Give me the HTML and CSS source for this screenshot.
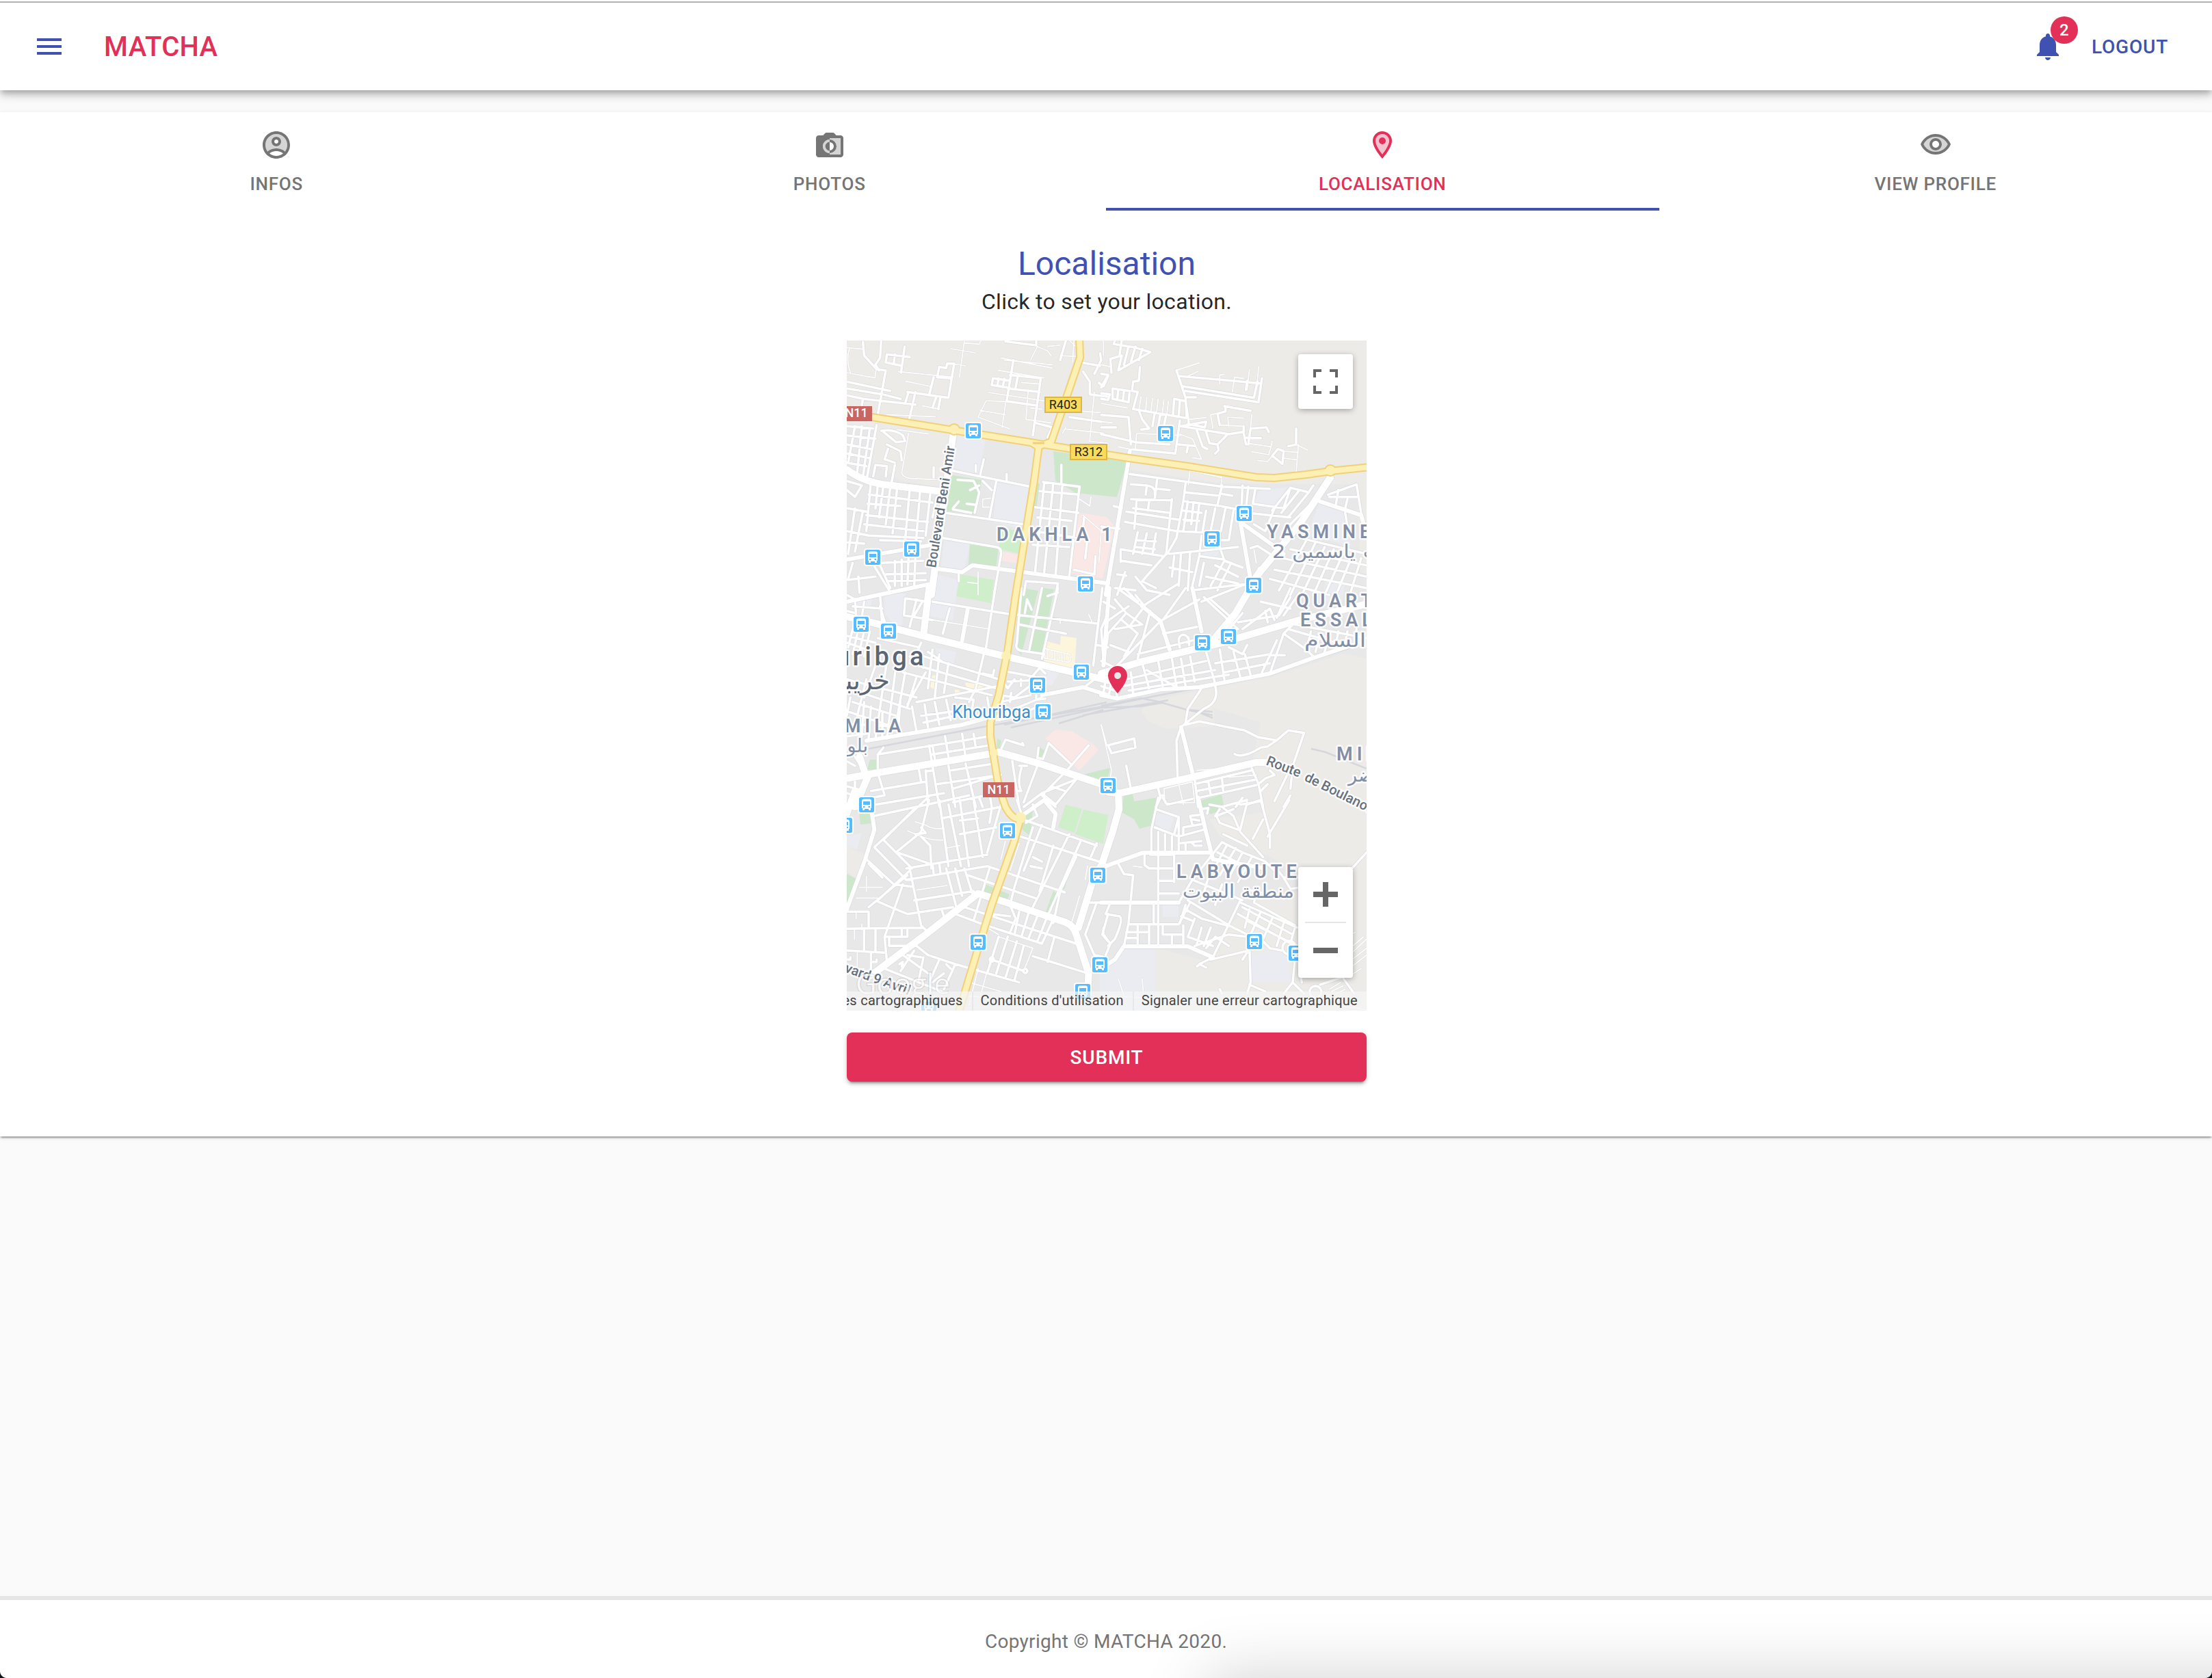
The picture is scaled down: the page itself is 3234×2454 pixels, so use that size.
FILE: index.html
```html
<!DOCTYPE html>
<html lang="fr">
<head>
<meta charset="utf-8">
<title>Matcha</title>
<link rel="stylesheet" href="styles.css">
</head>
<body>
<header class="appbar">
  <svg class="icon menu" viewBox="0 0 24 24"><path d="M3 18h18v-2H3v2zm0-5h18v-2H3v2zm0-7v2h18V6H3z"/></svg>
  <span class="brand">MATCHA</span>
  <div class="bell">
    <svg class="icon" viewBox="0 0 24 24"><path d="M12 22c1.1 0 2-.9 2-2h-4c0 1.1.89 2 2 2zm6-6v-5c0-3.07-1.64-5.64-4.5-6.32V4c0-.83-.67-1.5-1.5-1.5s-1.5.67-1.5 1.5v.68C7.63 5.36 6 7.92 6 11v5l-2 2v1h16v-1l-2-2z"/></svg>
    <span class="badge">2</span>
  </div>
  <span class="logout">LOGOUT</span>
</header>
<main class="paper">
  <nav class="tabs">
    <div class="tab">
      <svg class="icon" viewBox="0 0 24 24"><path opacity=".3" d="M12 4c-4.41 0-8 3.59-8 8 0 1.82.62 3.49 1.64 4.83 1.43-1.74 4.9-2.33 6.36-2.33s4.93.59 6.36 2.33C19.38 15.49 20 13.82 20 12c0-4.41-3.59-8-8-8zm0 9c-1.94 0-3.5-1.56-3.5-3.5S10.06 6 12 6s3.5 1.560 3.500 3.500S13.940 13 12 13z"/><path d="M12 2C6.480 2 2 6.480 2 12s4.480 10 10 10 10-4.480 10-10S17.520 2 12 2zM7.070 18.280c.43-.9 3.050-1.780 4.930-1.780s4.510.88 4.930 1.780C15.570 19.360 13.860 20 12 20s-3.570-.64-4.930-1.720zm11.290-1.450c-1.430-1.740-4.900-2.330-6.360-2.330s-4.930.59-6.360 2.330C4.620 15.490 4 13.820 4 12c0-4.410 3.590-8 8-8s8 3.590 8 8c0 1.820-.62 3.490-1.640 4.830zM12 6c-1.940 0-3.500 1.560-3.500 3.500S10.060 13 12 13s3.500-1.560 3.500-3.500S13.940 6 12 6zm0 5c-.83 0-1.500-.67-1.500-1.500S11.170 8 12 8s1.500.67 1.500 1.500S12.830 11 12 11z"/></svg>
      <span>INFOS</span>
    </div>
    <div class="tab">
      <svg class="icon" viewBox="0 0 24 24"><path opacity=".3" d="M12 7v1c2.8 0 5 2.200 5 5s-2.200 5-5 5v1h8V7z"/><path fill-rule="evenodd" d="M20 5h-3.170l-1.240-1.350c-.37-.41-.91-.65-1.470-.65H9.880c-.56 0-1.100.24-1.480.65L7.170 5H4c-1.100 0-2 .9-2 2v12c0 1.100.9 2 2 2h16c1.100 0 2-.9 2-2V7c0-1.100-.9-2-2-2zM12 18c-2.760 0-5-2.240-5-5s2.240-5 5-5V7h8v12h-8z"/><path opacity=".3" d="M12 8a5 5 0 0 0 0 10v-1.800a3.200 3.200 0 0 1 0-6.400z"/><path d="M12 8a5 5 0 0 1 0 10v-2a3 3 0 0 0 0-6zM12 9.800v6.400a3.200 3.200 0 0 1 0-6.400z"/></svg>
      <span>PHOTOS</span>
    </div>
    <div class="tab active">
      <svg class="icon" viewBox="0 0 24 24"><path opacity=".3" d="M12 4C9.240 4 7 6.240 7 9c0 2.850 2.920 7.210 5 9.880 2.110-2.690 5-7 5-9.880 0-2.760-2.240-5-5-5z"/><path d="M12 2C8.130 2 5 5.130 5 9c0 5.250 7 13 7 13s7-7.750 7-13c0-3.870-3.130-7-7-7zM7 9c0-2.760 2.240-5 5-5s5 2.240 5 5c0 2.880-2.880 7.190-5 9.880C9.920 16.210 7 11.850 7 9z"/><circle cx="12" cy="9" r="2.500"/></svg>
      <span>LOCALISATION</span>
    </div>
    <div class="tab">
      <svg class="icon" viewBox="0 0 24 24"><path opacity=".3" fill-rule="evenodd" d="M12 6c-3.790 0-7.170 2.130-8.820 5.500C4.830 14.870 8.210 17 12 17s7.170-2.130 8.820-5.500C19.170 8.130 15.790 6 12 6zm0 10c-2.480 0-4.500-2.020-4.500-4.500S9.520 7 12 7s4.500 2.020 4.500 4.500S14.480 16 12 16z"/><path d="M12 4C7 4 2.730 7.110 1 11.500 2.730 15.890 7 19 12 19s9.270-3.110 11-7.500C21.270 7.110 17 4 12 4zm0 13c-3.790 0-7.170-2.130-8.820-5.500C4.830 8.130 8.210 6 12 6s7.170 2.130 8.820 5.500C19.170 14.870 15.790 17 12 17zm0-10c-2.480 0-4.500 2.020-4.500 4.500S9.520 16 12 16s4.500-2.020 4.500-4.500S14.480 7 12 7zm0 7c-1.380 0-2.500-1.120-2.500-2.500S10.620 9 12 9s2.500 1.120 2.500 2.500S13.380 14 12 14z"/></svg>
      <span>VIEW PROFILE</span>
    </div>
  </nav>
  <section class="content">
    <h1 class="title">Localisation</h1>
    <p class="subtitle">Click to set your location.</p>
    <div class="map">
      <svg class="canvas" viewBox="0 0 760 980" width="760" height="980">
        <defs>
          <symbol id="bus" viewBox="0 0 26 26"><rect width="26" height="26" rx="4" fill="#fff" opacity=".85"/><rect x="2" y="2" width="22" height="22" rx="2.500" fill="#55bcff"/><path fill="#fff" fill-rule="evenodd" d="M9 4.500h8q3 0 3 3V18h-1v3h-3v-2h-6v2H7v-3H6V7.500q0-3 3-3zM8 8v5h10V8zM8 15v2h2.500v-2zM15.500 15v2H18v-2z"/></symbol>
          <g id="roads">
            <g transform="translate(-8 -8) scale(.33333)">
              <path class="thin" d="M24 55L95 62M35 62Q20 110 40 165M24 165L148 188L152 155M250 160L490 185M405 185L385 250M540 24L518 185M480 60L588 78M480 125L545 135M540 35L605 40L612 24M283 203L390 225M198 350L412 358M355 310L432 325M245 415L382 434M295 430L265 605Q270 625 300 628L420 635M700 100L925 145M715 110L925 130M755 110L745 185M688 155L890 188M645 252L900 290M635 288L600 360M635 288L730 292M608 330L720 350M600 360L738 412M722 290L705 405M790 208L870 215M820 240L810 370L920 385M830 320L880 325M985 405L970 430M985 412L1150 430M1085 465L1170 475M1110 250L1090 460M1010 330L1135 340M830 110L860 50L905 70L920 90M905 50L960 45M1020 24L1015 120M960 90L1035 95M1040 60L1000 24M600 1040V1140M555 1085L600 1090M1045 720L1090 750L1095 710M1060 790L1140 860L1130 1000M620 720V755H650M620 720L655 715"/>
              <path class="minor" d="M95 30L100 90L155 150L195 155L160 350M175 24L170 100L150 130L165 155M200 85L195 120L265 135M200 85L300 97M278 50L262 165M235 85L230 125M24 205L215 245M24 235L180 260L260 280M24 265L95 280L325 305M295 250L280 300M325 250L298 370M290 250L470 275L495 125L465 125L460 145L430 140L420 185L480 190M405 185L385 265M415 275L400 320M435 275L425 325M95 280L90 310M665 190L660 220L740 232M665 190L740 200M690 190L685 220M715 192L708 228M755 110L725 290M775 175L765 230M740 175L875 190L840 440M730 235L870 250M725 290L860 310M850 385L925 405L905 450M960 110L985 24M720 28L855 45V24M1050 120L1135 135M1135 80L1140 110L1110 170M1060 160L1090 205V260L1165 270M1130 210L1150 225L1170 180M1000 360L1140 380M24 400L140 410M155 395L110 640M60 400L30 560M90 400L70 600M125 410L95 620M24 440L150 455M24 480L130 500M24 520L125 540M24 560L110 575M175 420Q230 410 270 440L280 465L240 470L185 425M200 480L260 510L265 550M205 500L190 545L235 560M150 570L200 575L195 620M150 570L140 620M235 570L220 650M405 580V625M130 640L110 860M160 660L150 760M185 660L165 800M215 665L195 830M245 670L225 870M300 680L280 900M345 690L325 940M390 700L370 880M420 710L400 800M24 760L110 775M120 700L400 735M115 740L260 750M110 790L380 820M100 830L360 860M24 860L120 880L360 890M24 910L100 915M170 900L350 905M60 760L30 960M95 770L60 950M24 640L90 660L60 710L24 680M165 1000L215 1110M235 990V1100M265 985V1100M295 980L290 1095M325 975L320 1095M180 1000L360 990M190 1050L370 1045M200 1080L370 1075M50 1000L30 1070M24 1075L150 1060M75 1060L80 1130M130 990L210 1120M485 595L830 665M455 780L800 830M445 890L680 930Q705 935 700 965L670 1140M680 640L650 800M625 545L610 610M590 570V600M965 570V650M885 645L1045 665L1000 1060M890 650L850 1040M930 650L890 1040M970 655L940 1050M850 755L1040 780M860 800L1010 815M840 860L1040 890M840 920L1000 930M870 685L1040 700M800 1140L810 1080L950 1090L940 1140M725 610V640M510 635L580 640L605 690L585 780M565 680L605 660M490 765L570 780M515 730L490 760M550 740L590 745M620 640L660 680M515 1050V1080M1065 800L1060 850M1020 1030L1110 1050L1115 970M1080 890L1070 980"/>
              <path class="mid" d="M24 985L400 920M420 1025L530 1040L575 1010L1170 1090"/>
              <path class="major" d="M24 590Q90 640 180 655L430 685M490 440L395 1140"/>
            </g>
            <g transform="translate(372 -8) scale(.33333)">
              <path class="thin" d="M0 130L45 140M10 24V90M0 300L115 320M175 270L165 330M200 275L195 335M225 278L218 338M250 280L243 340M275 284L268 343M295 290L288 345M330 155L430 122M380 180L425 160M520 215V175L540 172M575 250L585 185L625 190M640 240L650 150M685 200L690 140M480 350L490 410M480 350L545 335M555 360L560 405M555 360L625 365M660 350L655 410M645 475L745 490L735 525L660 512M745 490L750 465M855 480L905 505M865 480L855 605M800 540L860 548M800 510L865 515M750 530L730 555L685 550M345 435L400 455L440 545L400 538M155 432L150 500M155 432L350 440M75 490L135 502M390 590L382 655M390 595L530 625L525 660M0 380L50 385M520 395L625 400M385 370L460 362M670 940L680 1000"/>
              <path class="minor" d="M60 24L55 40L150 55L215 75L75 155L90 90L40 105L45 165M90 24L80 90M120 50L100 130M150 50L130 120M180 60L165 110M170 140L165 200L140 205L135 245L160 250L140 325M0 170L30 175L0 230M50 235L125 245L120 295L50 280ZM75 240L70 285M100 243L95 290M0 255L38 260L30 285L0 280M140 325L380 365M165 330L180 370L210 410L175 415M235 340L225 400M260 345L250 400M285 350L275 400M320 280L315 350M320 280L370 290M345 290L340 355M370 290L385 390M330 155L370 275L375 360M340 180L700 212M360 225L670 275L685 205M370 245L690 295L705 190M640 200L635 240M370 273H415M345 375L335 450L325 520M350 400L460 380L455 405L380 390M350 400L560 435L620 425M540 312L655 332M510 345L520 395M545 312V335L510 345M625 400V430L635 480M655 410L725 405L735 425M655 410L645 480M630 450L700 452M420 420L445 490L465 500M460 425L475 475L510 480L555 435M510 480L515 505L500 520M855 410V480L820 488M750 530L795 565L800 510L775 500ZM0 405H65M0 350L120 360L130 480M0 435L150 470L300 480M135 502L325 520M340 480L410 487M380 490L375 515M125 610L530 665L740 675M130 655L200 660L195 700M245 635L235 720M370 650L360 730L330 890L290 960M530 660L510 745M310 720L285 960L180 1080M130 720L310 725M140 760L300 780M105 820L330 860L520 870M110 775L340 810M365 690L520 705M370 730L520 750L600 765M520 695L575 705M200 660Q240 665 235 700M250 675L300 680M155 730L145 850M210 730L205 770M160 865L140 960M200 870L180 960M240 870L225 960M155 900L240 905M150 930L235 940M85 940L270 970M85 990L220 1010M85 940V995M60 1110L150 1120M105 1040L70 1140M70 1050L110 1055M150 1060L200 1120L300 1140M180 1080L240 1110M300 960L600 930M320 970L310 1060M350 960L340 1100M390 950L380 1120M300 1020L400 1040M380 730L360 860M405 735L395 830M430 740L415 860M360 770L440 780M360 810L430 815M460 770L445 860M500 760L480 860M545 760L525 860M580 770L560 900H530M440 880L430 970L540 985M520 870V930L540 990L620 1020M480 1100L540 990M510 1120L570 1000M500 1010L600 1060M460 1060L600 1090M400 1120L660 1090M430 970L400 1100M450 1000L430 1100M620 660L615 760M645 665L635 760M675 680L665 740L800 760L830 670M640 780L830 800M670 830L720 860L760 760M830 670L750 770M870 680L790 780M910 690L820 800M830 670L910 690L930 660M995 700L1120 655L1140 780M1040 680L1030 740M1080 720L1070 760M1000 710L1130 710M920 740L830 830M1070 780L1080 840M55 750L90 760M0 840L80 850M800 980L1164 1060M830 940L1164 1010M900 900L780 1120M940 910L830 1140M980 930L880 1140M1020 940L930 1140M1060 960L980 1140M1100 970L1030 1140M1140 980L1090 1140M760 1030L1164 1110M740 1070L1000 1140M870 890L1164 960M655 935L685 925L740 960"/>
              <path class="mid" d="M125 510L120 550L20 1140M610 820L660 1100M610 820L750 920L800 960M960 730L1140 790L1160 860"/>
              <path class="major" d="M1005 625L870 830L680 1060"/>
            </g>
            <g transform="translate(-8 362) scale(.33333)">
              <path class="thin" d="M400 140L650 180M670 105L740 115M960 135V155M1140 600L1165 690M1085 115L1100 150M890 265L1000 290Q1015 320 995 325L890 308ZM905 268V310M920 270V312M935 275V315M950 280V318M965 283V320M980 288V322M455 650V670"/>
              <path class="minor" d="M60 50L65 120M400 60L740 115L1120 155M280 45L275 120L400 140M280 45L380 60M330 50L300 170M355 60L320 120M475 90L445 200M675 0L635 260M790 0L770 240Q760 270 790 275L890 290M880 0L825 270M950 0L880 310M780 160L985 200M1145 0L1105 340M1170 110L1140 180L1150 320M1120 250L1170 260M815 50L835 95M815 50L805 110M905 35L950 20M350 240L330 290L690 400M300 330L680 440M270 370L660 470M625 290L590 440L560 500M720 365L850 390M730 410L830 405M620 375L665 385L670 360M700 400L730 440L760 400M700 470L760 480L840 420M710 480L690 560M870 350L840 385M870 350L895 375M855 470V490L895 485M745 460L740 500M788 400V430M700 500L830 470M1060 440L1110 400M1110 400L1170 390M680 580L760 530L880 480M690 580L780 560L860 520M160 730L650 650M160 730V790M185 700L160 730M385 690L430 960M400 690L415 780M455 650L470 740M530 640L545 740M580 640L590 700M400 730L650 690M470 780L500 960M545 770L590 960M480 800L670 770M490 880L690 820M160 810L190 910L130 920M130 890L370 850M370 800L380 940M340 795L350 850M370 805L400 800M150 950L450 900M420 860L700 820M490 940L680 900M605 920L620 960M650 900L660 960M750 760L780 960M790 790Q770 860 790 890L770 890M780 780H815M860 780L800 940M800 960L880 900L1030 840M1030 840L940 950L880 900M970 820L880 910L940 960M920 870L980 890M910 680L1010 775M1085 690L990 800M910 680L885 750L860 745L865 700M700 710L720 665L800 690L795 680M200 320L150 660M240 340L200 660M280 370L240 600M330 390L290 520M150 340L100 480M110 400L70 560M24 400L330 480M60 450L300 530M50 500L240 560M24 540L200 600M400 270L380 440M430 290L410 480M470 330L450 460M380 280L440 320M300 300L360 350M370 370L290 510M330 500L690 430M310 520L330 630M365 510L380 610M410 500L430 600M460 490L480 580M500 480L580 490L570 560M350 560L500 540M360 590L500 560M100 500L90 650M130 520L120 660M180 550V650M24 210L150 240M24 240L110 270M75 180L50 290M100 190L75 300M50 180L30 260M125 190L100 300M160 220L340 260M170 80L200 180M100 60L90 130M170 30L180 170M50 80L180 90M24 100L60 110M24 30L60 50M260 480L250 620M150 600L230 610M640 480L650 540M24 870L100 890M24 900L60 910M60 850V900M24 600H120M24 650L110 640M40 480L24 560M60 740L100 800M24 760L60 780"/>
              <path class="mid" d="M24 60L400 -20M555 90L530 230M880 470L1060 435L1170 470M110 670L530 600L690 555"/>
              <path class="major" d="M385 0L360 210M24 125L130 150L380 215L720 300L1020 370L1170 405M24 835L150 812L670 725M690 720L870 770L1170 870M120 820L60 960M80 740L110 830"/>
            </g>
            <g transform="translate(372 362) scale(.33333)">
              <path class="thin" d="M0 600L45 800L40 830M275 880L400 850L410 940L280 945ZM340 860L360 950M420 800L560 790M560 830L680 820"/>
              <path class="minor" d="M180 80L340 -20M215 100L160 310M270 140L370 0M260 145L60 350M270 200L420 170M160 290L440 220M260 145L430 50M180 330L210 440M250 320L270 430M310 310L330 430M350 310L370 430M390 300L410 410M460 280L500 420M520 270L540 400M580 280L610 390M630 290L655 380M130 370L140 460M110 400L460 320M100 430L500 360M120 450L560 380M200 360L320 430M500 330L740 290M540 370L740 330M560 260L620 290L640 250M740 375L800 200L870 130M705 370L770 230M740 295H805M800 200L900 270L930 300M820 180L1100 260M850 160L1164 220M920 190L900 270M960 200L940 280M1000 200L980 280M1040 190L1025 270M1080 190L1065 260M1120 180L1110 250M480 50L560 120M450 40L600 180M640 -20L440 60M600 150L780 120L830 40M620 180L740 90L760 140M720 100L730 150M830 0L770 130M870 20L800 120M560 180L620 110M700 60L830 90M10 60L60 90M60 50L110 110L30 200M110 110L180 160L60 180M150 30L190 80L130 160M90 140L160 200L100 300M30 200L10 340M70 0L180 80M100 0L160 60M120 80L20 150M40 250L120 280M0 320L60 350M0 400L60 410L70 480M0 430L60 450M20 400L10 460M45 400L35 465M345 260Q330 210 360 205Q390 210 385 250M440 440L380 530L370 590M500 430Q520 500 450 530L350 610L330 670L335 830M370 600L430 585L630 625L690 655L770 668M820 625L770 668L730 695L700 700Q620 750 585 728M820 625L890 635L840 780M30 690L145 660L150 700L45 725ZM110 780L130 880M250 880L260 920L240 960M410 840L425 960M660 790L690 860L710 960M410 860L660 800M420 890L680 840M430 920L680 865M470 850L480 905M530 840L535 890M690 860L720 835L760 820L740 800M760 935L830 790M730 860L700 890M835 830L830 880M830 910L800 960M590 960L620 920M610 950L700 935M260 910H275"/>
              <path class="mid" d="M35 0L10 340M400 0L440 190M180 80L260 145L300 270M0 470L70 485L260 445L430 435L740 375L920 310L1100 250M350 610L400 810"/>
              <path class="major" d="M700 -80L590 110L490 230M0 375L170 325L530 240L870 140L1164 70M30 895L80 900L400 830L680 765L740 765M75 900L78 970L50 1070L0 1220"/>
            </g>
            <g transform="translate(-8 672) scale(.33333)">
              <path class="thin" d="M330 395L465 375M80 383H180M110 335V400M65 430H160M325 95L370 110Q400 130 440 125M290 135L350 160Q400 180 445 175M465 210L520 200M780 190L740 310M1045 420L1010 540M1080 290L1070 350M720 180L700 260M65 490V520M58 570V610M90 545V570M70 670V740H100M640 560L690 590M600 740L560 900M560 800L700 840M640 750L610 860M560 860L1100 900M24 870L520 880M800 850L1000 920M690 600L840 650L800 750M120 860L200 900"/>
              <path class="minor" d="M145 70L400 15L560 -20M145 207L390 -20M145 207L285 350H310M185 175L310 300M185 175L320 40M240 230L350 140L385 0M245 230L390 280M285 300L640 240M285 350L640 290L980 405M160 440L300 310M120 470L290 330M105 255L230 370M24 490L120 490V560M24 565L360 560M160 445L240 480L290 500L490 470M300 300L350 550L370 570M230 370L310 380M270 370L190 600L200 710M320 440L580 400M430 0L470 290M520 0L560 290M470 20L525 290M580 0L620 250M440 80L650 40M520 150L680 120M520 90L600 80M650 300L580 530M350 160L390 200L395 300M325 150L370 145L350 120M460 300L510 490M500 300L530 420M540 300L575 410M400 280L405 320M430 280L435 320M555 330L850 430M440 480L450 510M500 500L620 545L880 630L935 510M540 470L1030 630M770 155L1130 270L1170 290M810 90L1120 200M840 120L760 380L740 460M880 110L800 310M1000 150L840 470M930 200L870 400M1050 180L900 520M1030 250L960 400L930 540M1120 190L1090 260M840 250L880 270M830 290L880 300M780 490L760 590M820 500L790 600M860 510L820 610M900 520L860 620M740 460L765 520L740 580M660 500L740 510M660 40L650 100M700 20L640 230M650 40L700 30M770 0L790 60M840 20L860 70L810 100M1090 450H1170M1120 450L1070 590L1110 680L1160 690M1170 500L1145 590L1170 620M840 685L1080 760M935 600L905 710M330 640L380 680L500 720L780 800M500 720L450 830M190 740L440 840M270 680L380 760M320 660L260 750M360 690L340 790M430 700L390 790M460 720L480 740M290 680L350 690M24 660L190 670M130 670V750M100 570V660M150 570V665M24 700H40V690M135 710H155V700M190 600H290V570M265 570V600M210 600V640H330M690 600L640 760M730 600L680 760M770 620L720 780M800 640L760 790M660 700L800 750M120 280L180 340M255 720L270 710L265 730M400 800L450 760"/>
              <circle class="minor" cx="660" cy="700" r="9"/><circle class="minor" cx="807" cy="750" r="9"/>
              <path class="mid" d="M24 480L105 260L145 130L135 60M790 70L890 0L940 60L930 120"/>
              <path class="major" d="M24 60L60 -40M130 770L370 590L600 410L740 455L980 535Q1020 550 1030 590L1085 760L1080 850M1140 290L1110 330L1040 560"/>
            </g>
            <g transform="translate(372 672) scale(.33333)">
              <path class="thin" d="M75 785L100 860M180 785L185 850M0 860L500 880M200 920L400 870M140 290L180 295M1104 640L1150 600M1100 700L1164 650M1100 730L1164 680M1100 765L1140 740M1080 600L1115 580M1100 670L1164 610M800 870L1164 920M500 920L640 860M1000 830L1050 800M1010 840L1060 815M1030 850L1070 830"/>
              <path class="minor" d="M250 -10L220 130V240M240 40L340 75V230M235 120L340 160M75 280L100 325L140 330L120 540L100 640M190 230V285L210 300H320M250 140V640M280 150V225M310 160V225M340 75L320 150M320 240V360M215 240H320M250 355H320M230 450V540M120 545H340L390 450M250 410H340M270 -10L290 20L400 -5M340 450L400 350L530 185L620 230L720 270M380 440L560 550M370 480L440 520L550 550M560 550L640 590M410 640L560 590L640 600M610 440L490 690L380 640M340 160L450 130M345 190L440 180M390 70L400 110M390 70L430 65M360 120L445 105M360 120V150M400 85L430 90M400 190L410 200L440 200M370 190V220M475 20L530 30L580 70L610 140L710 250M530 30L640 0M505 70L520 100L600 130M505 70L580 40M535 150L640 200M640 10L610 130M640 20L700 0L740 150V210M825 0L730 160M710 85L665 170M510 230L630 290M550 200L480 330M590 210L520 330M620 230L560 340M660 250L600 360M400 350L620 440M470 340L440 440M530 370L500 460M610 450L860 560M680 410L670 450L850 550M600 500L850 640M650 480L630 560M700 490L660 580M750 520L710 610M800 540L770 640M850 560L820 660M620 470L840 590M640 530L820 620M480 700L650 660L640 600M490 690L430 720L460 735M420 730L450 710M620 700L640 670M460 650L500 600L560 640M480 560L450 640M380 600L490 640M650 640L655 800L640 850M650 810L720 840M850 700L840 800L800 850M840 800L890 850M870 740L880 800M520 830L530 850M700 610L740 650L790 660M960 810L1050 780M1060 780L1110 850M1164 230L1100 300M800 340L830 390L864 385M760 290L800 340H864M630 390L760 420M720 270L760 310M40 450L20 500L80 510Q100 520 60 610L30 640M10 560L10 590L40 630L20 680M160 550V640M210 550V640M270 550V590H360M310 590V640M360 550V640M110 580H210M110 605H160M410 520L380 600M440 560L420 630M350 510L400 530M370 460L345 540M520 40L500 70M440 40L470 35L465 60"/>
              <circle class="minor" cx="940" cy="842" r="26"/><circle class="minor" cx="825" cy="648" r="30"/>
              <path class="mid" d="M20 290L180 232L475 230M0 450H340M100 642H380L490 690M425 -10L450 100L490 260M490 260L720 300M100 640L60 700L30 720"/>
            </g>
          </g>
          <g id="highways"><path d="M-5 105L37 112L155 131L269 149L325 158L413 172L499 184L599 200L625 201L672 196L707 191L765 185M340 -5L341 25L299 148L280 155M269 149Q282 155 280 160L274 205L247 372L235 455L222 519L210 559V579L222 652L232 682Q243 702 254 699L245 732L212 825L192 889L163 985"/></g>
        </defs>
        <rect width="760" height="980" fill="#e8e8e8"/>
        <g class="outskirts">
          <path d="M0 0H760V340H752L745 210H692L549 209L413 189L290 158L155 137L140 215L80 205L38 180L42 130L0 125Z"/>
          <path d="M760 465L725 458L620 492L450 525L430 540L440 556L467 568L537 564L537 538L605 558L594 612L600 650L610 690L530 700L545 725L620 755L700 810L760 850V465Z"/>
          <path d="M760 780L700 800L600 815L560 855L535 910L450 888L450 980H760ZM0 740L35 755L15 790L0 775Z"/>
        </g>
        <g class="water"><path d="M162 138L203 145L193 195L155 186ZM219 208L268 216L255 275L214 266ZM142 293L180 298L172 335L138 330ZM130 342L163 350L155 410L118 402ZM602 220L645 214L622 244L595 238ZM690 240L727 252L737 300L672 285ZM525 302L545 306L540 322L518 317ZM700 352L728 358L724 385L695 380ZM55 370L86 370L80 425L55 400ZM130 450L160 455L155 478L132 470ZM285 480L310 486L300 505L280 500ZM16 375L38 370L35 392L15 390ZM452 690L478 697L472 718L450 707ZM462 825H485V843H462ZM400 890H451V980H370V925ZM592 896L642 893L650 938H590ZM0 725L22 720L15 744L0 740Z"/></g>
        <g class="park"><path d="M302 162L410 176L395 229L335 223L305 205ZM150 196L197 204L189 255L146 249ZM275 205L282 210L277 245L270 240ZM180 298L222 304L218 332L178 328ZM257 362L280 366L255 460L247 450ZM287 362L303 364L285 458L267 455ZM220 582L226 585L223 600H219ZM280 594L290 600L282 612L277 604ZM345 635L385 625L382 640L370 645ZM405 665L418 663L420 674L456 668L450 708L428 714L420 700L402 690ZM519 672L548 664L552 684L532 693L519 680ZM34 613H43V628L30 627ZM18 690L35 693V706L20 708ZM0 780L14 787L0 830ZM252 700L272 687L268 725L240 700ZM202 795L238 810L234 820L197 807ZM329 755L333 755L318 803L313 801ZM302 805L307 808L294 840L290 838ZM545 755L560 760L550 768L533 755Z"/></g>
        <g class="park bright"><path d="M226 275L268 280L255 312L222 305ZM166 342L215 350L211 384L160 374ZM320 679L344 685L333 720L309 712ZM346 686L382 694L375 736L334 722Z"/></g>
        <g class="beige"><path d="M313 432L336 435L333 480L288 472L293 440L312 445ZM173 500L201 504L198 515L176 512ZM125 490L131 489L128 510L122 507ZM158 510L165 512V516H158Z"/></g>
        <g class="pink"><path d="M340 252L380 258L392 272L374 348L326 340ZM228 309L250 313L248 326L226 322ZM290 582L305 569L330 572L360 590L368 599L340 629L315 605Z"/></g>
        <g class="rail">
          <path d="M32 597L205 564L382 534L450 520L520 507L618 487L740 448M230 562L380 529M240 566L372 537M310 560L375 540M345 548L470 526M372 534L430 523L455 528L497 540L535 543M372 537L430 535L460 530M497 540L535 548M508 541L535 552M679 597L700 602L760 626"/>
        </g>
        <use href="#roads" class="casing"/>
        <use href="#roads" class="fill"/>
        <g fill="none" stroke-linejoin="round">
          <use href="#highways" stroke="#f1d078" stroke-width="12"/>
          <circle cx="157" cy="130" r="9" fill="#f1d078"/><circle cx="707" cy="190" r="9" fill="#f1d078"/><circle cx="233" cy="461" r="7" fill="#fdf0b4"/><circle cx="254" cy="698" r="8" fill="#fdf0b4"/><circle cx="215" cy="603" r="6" fill="#fdf0b4"/>
          <use href="#highways" stroke="#fdf0b4" stroke-width="8"/>
          <circle cx="157" cy="130" r="7" fill="#fdf0b4"/><circle cx="707" cy="190" r="7" fill="#fdf0b4"/><path d="M272 150H289" stroke="#f1d078" stroke-width="3"/>
        </g>
        <g>
          <use href="#bus" x="172" y="119" width="26" height="26"/><use href="#bus" x="82" y="292" width="26" height="26"/><use href="#bus" x="25" y="304" width="26" height="26"/><use href="#bus" x="336" y="343" width="26" height="26"/><use href="#bus" x="453" y="123" width="26" height="26"/><use href="#bus" x="568" y="240" width="26" height="26"/><use href="#bus" x="521" y="277" width="26" height="26"/><use href="#bus" x="582" y="345" width="26" height="26"/><use href="#bus" x="8" y="402" width="26" height="26"/><use href="#bus" x="48" y="412" width="26" height="26"/><use href="#bus" x="330" y="472" width="26" height="26"/><use href="#bus" x="266" y="491" width="26" height="26"/><use href="#bus" x="274" y="530" width="26" height="26"/><use href="#bus" x="507" y="429" width="26" height="26"/><use href="#bus" x="545" y="420" width="26" height="26"/><use href="#bus" x="369" y="638" width="26" height="26"/><use href="#bus" x="16" y="666" width="26" height="26"/><use href="#bus" x="-16" y="696" width="26" height="26"/><use href="#bus" x="222" y="704" width="26" height="26"/><use href="#bus" x="354" y="769" width="26" height="26"/><use href="#bus" x="179" y="867" width="26" height="26"/><use href="#bus" x="357" y="900" width="26" height="26"/><use href="#bus" x="332" y="939" width="26" height="26"/><use href="#bus" x="107" y="959" width="26" height="26"/><use href="#bus" x="583" y="866" width="26" height="26"/><use href="#bus" x="644" y="883" width="26" height="26"/>
        </g>
        <rect x="-9" y="96" width="46" height="22" fill="#c96662"/><text class="shield red" x="14" y="112">N11</text>
        <rect x="199" y="646" width="46" height="22" fill="#c96662"/><text class="shield red" x="222" y="663">N11</text>
        <rect x="290" y="83" width="53" height="22" fill="#fadb5a" stroke="#dbb54e" stroke-width="2"/><text class="shield" x="316.500" y="100">R403</text>
        <rect x="327" y="152" width="53" height="22" fill="#fadb5a" stroke="#dbb54e" stroke-width="2"/><text class="shield" x="353.500" y="169">R312</text>
        <g class="labels">
          <text class="street" transform="translate(130 333) rotate(-81)" textLength="180">Boulevard Beni Amir</text>
          <text class="street" transform="translate(612 620) rotate(21)">Route</text>
          <text class="street" transform="translate(668 643) rotate(26.500)">de Boulanouare</text>
          <text class="street" transform="translate(-4 923) rotate(20)">vard 9 Avril</text>
          <text class="area" x="219" y="293">DAKHLA 1</text>
          <text class="area" x="614" y="289">YASMINE</text>
          <text class="area" x="657" y="390">QUARTIER</text>
          <text class="area" x="663" y="418">ESSALAM</text>
          <text class="area" x="85" y="573" text-anchor="end">JAMILA</text>
          <text class="area" x="716" y="614">MINE</text>
          <text class="area" x="482" y="786">LABYOUTE</text>
          <text class="arabic" x="622" y="318" textLength="122" lengthAdjust="spacingAndGlyphs">ياسمين 2</text>
          <text class="arabic" x="755" y="318">ب</text>
          <text class="arabic" x="669" y="448" textLength="90" lengthAdjust="spacingAndGlyphs">السلام</text>
          <text class="arabic rtl" x="31" y="602">بلوك</text>
          <text class="arabic" x="733" y="645">خضر</text>
          <text class="arabic" x="491" y="815" textLength="163" lengthAdjust="spacingAndGlyphs">منطقة البيوت</text>
          <text class="city" x="117" y="475" text-anchor="end">Khouribga</text>
          <text class="arabic dark rtl" x="63" y="510">خريبكة</text>
          <text class="station" x="154" y="552" textLength="115" lengthAdjust="spacingAndGlyphs">Khouribga</text>
        </g>
        <text class="watermark" x="13" y="956">Google</text>
        <path transform="translate(372 472) scale(2)" fill="#e33059" d="M12 2C8.130 2 5 5.130 5 9c0 5.250 7 13 7 13s7-7.750 7-13c0-3.870-3.130-7-7-7zm0 9.500c-1.380 0-2.500-1.120-2.500-2.500s1.120-2.500 2.500-2.500 2.500 1.120 2.500 2.500-1.120 2.500-2.500 2.500z"/>
      </svg>
      <div class="control fullscreen"><svg viewBox="0 0 36 36" width="36" height="36"><path d="M0 0h12v4H4v8H0zM24 0h12v12h-4V4h-8zM0 24h4v8h8v4H0zM32 24h4v12H24v-4h8z"/></svg></div>
      <div class="control zoom">
        <svg viewBox="0 0 36 36" width="36" height="36"><path d="M14 0h8v14h14v8H22v14h-8V22H0v-8h14z"/></svg>
        <i class="rule"></i>
        <svg viewBox="0 0 36 36" width="36" height="36"><path d="M0 14h36v8H0z"/></svg>
      </div>
      <div class="legal"><span>Données cartographiques</span><span>Conditions d'utilisation</span><span>Signaler une erreur cartographique</span></div>
    </div>
    <button class="submit">SUBMIT</button>
  </section>
</main>
<footer class="footer"><span>Copyright © MATCHA 2020.</span><i class="shade"></i><i class="corner left"></i><i class="corner right"></i></footer>
</body>
</html>
```
FILE: styles.css
```css
* { box-sizing: border-box; }
body {
  margin: 0; height: 2454px; overflow: hidden;
  display: flex; flex-direction: column;
  background: #fafafa; color: rgba(0, 0, 0, .87);
  font-family: Roboto, "Liberation Sans", sans-serif;
}
.icon { width: 48px; height: 48px; fill: currentColor; display: block; flex: none; }

.appbar {
  height: 132px; flex: none; position: relative; z-index: 0;
  display: flex; align-items: center; padding: 4px 64px 0 48px;
  background: linear-gradient(#fff 2px, #b4b4b4 2px 4px, #fff 4px);
  color: #4052b1;
  box-shadow: 0 4px 8px -2px rgba(0,0,0,.2), 0 8px 10px rgba(0,0,0,.14), 0 2px 20px rgba(0,0,0,.12);
}
.brand { margin-left: 56px; color: #e33059; font-size: 40px; font-weight: 500; letter-spacing: .3px; }
.bell { position: relative; margin-left: auto; }
.badge {
  position: absolute; left: 28px; top: -20px; width: 40px; height: 40px; border-radius: 20px;
  background: #e33059; color: #fff; font-size: 24px; font-weight: 500; line-height: 40px; text-align: center;
}
.logout { margin-left: 40px; font-size: 28px; font-weight: 500; letter-spacing: .8px; }

.paper {
  position: relative; z-index: 1; margin-top: 32px; height: 1498px; flex: none; background: #fff;
  box-shadow: 0 4px 2px -2px rgba(0,0,0,.2), 0 2px 2px rgba(0,0,0,.14), 0 2px 6px rgba(0,0,0,.12);
}
.tabs { display: grid; grid-template-columns: repeat(4, 1fr); height: 144px; }
.tab {
  display: flex; flex-direction: column; align-items: center; padding-top: 24px;
  color: #757575; font-size: 26px; font-weight: 500; letter-spacing: .74px; line-height: 44px;
}
.tab span { margin-top: 11px; }
.active { color: #e33059; box-shadow: inset 0 -4px #4052b1; }
.content { width: 762px; padding-left: 2px; margin: 0 auto; display: flex; flex-direction: column; }
.title { margin: 46px 0 0; text-align: center; font-size: 48px; line-height: 64px; font-weight: 400; color: #4052b1; }
.subtitle { margin: -1px 0 0; text-align: center; font-size: 32px; line-height: 48px; letter-spacing: .3px; }

.map { position: relative; width: 760px; height: 980px; margin-top: 33px; overflow: hidden; }
.canvas { display: block; }
.outskirts { fill: #ecebe7; }
.water { fill: #eaecf1; }
.park { fill: #cde7cb; }
.bright { fill: #cfeeca; }
.beige { fill: #fdf5dc; }
.pink { fill: #f9e8e5; }
.rail { fill: none; stroke: #d5d7dc; stroke-width: 2.5; }
.casing, .fill { fill: none; stroke-linecap: round; stroke-linejoin: round; }
.casing { --edge: 4px; stroke: #d9dade; }
.fill { --edge: 0px; stroke: #fff; }
.thin { stroke-width: calc(5px + var(--edge) * .6); }
.minor { stroke-width: calc(10.5px + var(--edge)); }
.mid { stroke-width: calc(18px + var(--edge)); }
.major { stroke-width: calc(31px + var(--edge)); }
.shield { font-size: 18px; text-anchor: middle; fill: #222; }
.red { fill: #fff; font-weight: 500; }
.labels text { paint-order: stroke; stroke: rgba(255,255,255,.85); stroke-width: 5px; stroke-linejoin: round; }
.street { font-size: 20px; font-weight: 500; fill: #66717f; }
.area { font-size: 27px; font-weight: 600; letter-spacing: 6px; fill: #828ea6; }
.arabic { font-family: "DejaVu Sans", sans-serif; font-size: 27px; fill: #828ea6; }
.rtl { direction: rtl; }
.dark { fill: #5b6573; font-size: 37px; }
.city { font-size: 38px; font-weight: 500; letter-spacing: 4.4px; fill: #5b6573; }
.station { font-size: 26px; fill: #3d8fcb; }
.watermark { font: 500 42px "Open Sans", sans-serif; fill: #fff; opacity: .7; paint-order: stroke; stroke: rgba(110,110,110,.3); stroke-width: 2px; }
.control {
  position: absolute; left: 660px; width: 80px; border-radius: 4px; background: #fff; fill: #666;
  display: flex; flex-direction: column; align-items: center; box-shadow: 0 2px 8px rgba(0,0,0,.3);
}
.fullscreen { top: 20px; height: 80px; justify-content: center; }
.zoom { top: 770px; height: 162px; justify-content: space-between; padding: 22px 0; }
.rule { width: 60px; height: 2px; background: #e6e6e6; }
.legal {
  position: absolute; right: 0; bottom: 0; height: 28px; display: flex;
  background: rgba(245,245,245,.72); color: #444; font-size: 20px; line-height: 27px; letter-spacing: .27px; white-space: nowrap;
}
.legal span { padding: 0 13px 0 11px; border-left: 2px solid rgba(225,225,225,.6); }
.submit {
  margin: 32px 0 0; height: 72px; border: 0; border-radius: 8px; background: #e33059; color: #fff;
  font: 500 28px Roboto, sans-serif; letter-spacing: .8px;
  box-shadow: 0 6px 2px -4px rgba(0,0,0,.2), 0 4px 4px rgba(0,0,0,.14), 0 2px 10px rgba(0,0,0,.12);
}

.footer {
  position: relative; overflow: hidden; margin-top: auto; height: 120px; flex: none;
  display: flex; align-items: center; justify-content: center;
  background: #fff; border-top: 6px solid #e6e6e6; color: #757575; font-size: 28px; letter-spacing: .3px;
}
.footer span { margin-top: 6px; }
.shade { position: absolute; left: 1765px; right: -200px; top: 114px; height: 400px; box-shadow: 0 0 90px rgba(0,0,0,.19); }
.corner { position: absolute; bottom: 0; width: 10px; height: 10px; }
.left { left: 0; background: radial-gradient(circle at 10px 0, transparent 9.500px, #101418 10.500px); }
.right { right: 0; background: radial-gradient(circle at 0 0, transparent 9.500px, #101418 10.500px); }
```
